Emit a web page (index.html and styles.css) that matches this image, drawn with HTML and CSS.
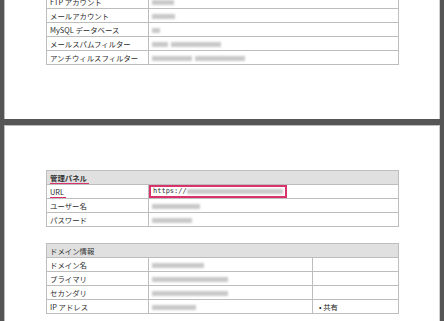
FILE: index.html
```html
<!DOCTYPE html>
<html lang="ja">
<head>
<meta charset="utf-8">
<link rel="stylesheet" href="styles.css">
</head>
<body>
<div class="viewer">
  <div class="page page-one">
    <table class="info first">
      <colgroup><col class="c-label"><col></colgroup>
      <tr><td class="label">FTP アカウント</td><td class="val"><span class="blur" style="width:22px"></span></td></tr>
      <tr><td class="label">メールアカウント</td><td class="val"><span class="blur" style="width:23px"></span></td></tr>
      <tr><td class="label">MySQL データベース</td><td class="val"><span class="blur" style="width:8px"></span></td></tr>
      <tr><td class="label">メールスパムフィルター</td><td class="val"><span class="blur" style="width:16px"></span><span class="blur" style="width:50px"></span></td></tr>
      <tr><td class="label">アンチウィルスフィルター</td><td class="val"><span class="blur" style="width:40px"></span><span class="blur" style="width:50px"></span></td></tr>
    </table>
  </div>
  <div class="page page-two">
    <table class="info">
      <colgroup><col class="c-label"><col></colgroup>
      <tr class="head"><td colspan="2"><span class="mark bold">管理パネル</span></td></tr>
      <tr><td class="label"><span class="mark">URL</span></td><td class="val"><span class="box">https://<span class="blur" style="width:96px"></span></span></td></tr>
      <tr><td class="label">ユーザー名</td><td class="val"><span class="blur" style="width:48px"></span></td></tr>
      <tr><td class="label">パスワード</td><td class="val"><span class="blur" style="width:40px"></span></td></tr>
    </table>
    <table class="info domain">
      <colgroup><col class="c-label"><col class="c-val"><col></colgroup>
      <tr class="head"><td colspan="3">ドメイン情報</td></tr>
      <tr><td class="label">ドメイン名</td><td class="val"><span class="blur" style="width:52px"></span></td><td class="extra"></td></tr>
      <tr><td class="label">プライマリ</td><td class="val"><span class="blur" style="width:76px"></span></td><td class="extra"></td></tr>
      <tr><td class="label">セカンダリ</td><td class="val"><span class="blur" style="width:76px"></span></td><td class="extra"></td></tr>
      <tr><td class="label">IP アドレス</td><td class="val"><span class="blur" style="width:44px"></span></td><td class="extra">• 共有</td></tr>
    </table>
  </div>
</div>
</body>
</html>
```

FILE: styles.css
```css
html, body {
  margin: 0;
  padding: 0;
  background: #555555;
  overflow: hidden;
}
.viewer {
  width: 444px;
  height: 321px;
  background: #555555;
  overflow: hidden;
  font-family: "Noto Sans CJK JP", "Noto Sans", sans-serif;
  font-size: 7.4px;
  color: #333333;
}
.page {
  margin-left: 4px;
  width: 436px;
  background: #ffffff;
  border-left: 1px solid #bdbdbd;
  border-right: 1px solid #cfcfcf;
  box-sizing: border-box;
}
.page-one {
  height: 119px;
  padding: 0 0 0 41px;
  overflow: hidden;
}
.page-two {
  margin-top: 6px;
  height: 200px;
  padding: 44px 0 0 41px;
  border-top: 1px solid #bdbdbd;
}
.info {
  width: 353px;
  border-collapse: collapse;
  table-layout: fixed;
  border: 1px solid #bdbdbd;
}
.c-label {
  width: 102px;
}
.c-val {
  width: 164px;
}
.info.first {
  margin-top: -6px;
}
.info.domain {
  margin-top: 16px;
}
.info td {
  height: 14px;
  padding: 0 0 0 3px;
  border: 1px solid #bdbdbd;
  line-height: 12px;
  white-space: nowrap;
  overflow: visible;
  box-sizing: border-box;
}
.info td.label {
  color: #2b2b2b;
}
.info td.extra {
  padding-left: 6px;
  color: #222222;
}
.info tr.head td {
  background: #e0e0e0;
  color: #333333;
}
.bold {
  font-weight: 700;
}
.mark {
  display: inline-block;
  border-bottom: 1.5px solid #d8336a;
  line-height: 10px;
  padding-right: 2px;
}
.blur {
  display: inline-block;
  height: 5px;
  margin-right: 3px;
  background: #c9c9c9;
  filter: blur(1px);
  vertical-align: middle;
}
.val {
  padding-left: 3px;
}
.box {
  display: inline-block;
  margin-left: -3px;
  width: 138px;
  height: 13px;
  box-sizing: border-box;
  border: 2px solid #d8336a;
  padding-left: 2px;
  line-height: 9px;
  font-family: "DejaVu Sans Mono", monospace;
  font-size: 7px;
  color: #333333;
  vertical-align: middle;
}
```
